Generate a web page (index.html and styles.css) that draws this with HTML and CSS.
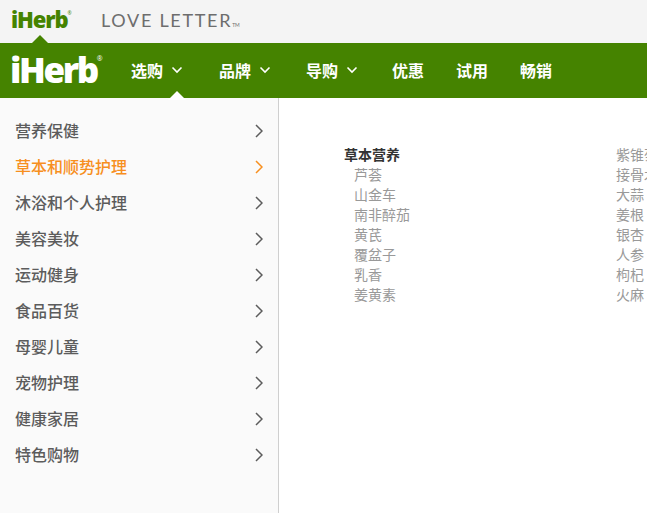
FILE: index.html
```html
<!DOCTYPE html>
<html lang="zh-CN">
<head>
    <meta charset="UTF-8">
    <title>iHerb</title>
    <link rel="stylesheet" href="styles.css">
</head>
<body>
    <div class="topbar">
        <div class="top-tab">
            <span class="logo-small">iHerb<sup>®</sup></span>
        </div>
        <span class="love-letter">LOVE LETTER<small>TM</small></span>
    </div>
    <nav class="navbar">
        <span class="logo-main">iHerb<sup>®</sup></span>
        <div class="nav-items">
            <a class="nav-item nav-active">选购
                <svg class="caret" viewBox="0 0 12 8"><path d="M1.5 1.5 6 6l4.5-4.5"/></svg>
            </a>
            <a class="nav-item">品牌
                <svg class="caret" viewBox="0 0 12 8"><path d="M1.5 1.5 6 6l4.5-4.5"/></svg>
            </a>
            <a class="nav-item">导购
                <svg class="caret" viewBox="0 0 12 8"><path d="M1.5 1.5 6 6l4.5-4.5"/></svg>
            </a>
            <a class="nav-item">优惠</a>
            <a class="nav-item">试用</a>
            <a class="nav-item">畅销</a>
        </div>
    </nav>
    <div class="main">
        <ul class="sidebar">
            <li>营养保健<svg class="arrow" viewBox="0 0 8 14"><path d="M1 1l6 6-6 6"/></svg></li>
            <li class="current">草本和顺势护理<svg class="arrow" viewBox="0 0 8 14"><path d="M1 1l6 6-6 6"/></svg></li>
            <li>沐浴和个人护理<svg class="arrow" viewBox="0 0 8 14"><path d="M1 1l6 6-6 6"/></svg></li>
            <li>美容美妆<svg class="arrow" viewBox="0 0 8 14"><path d="M1 1l6 6-6 6"/></svg></li>
            <li>运动健身<svg class="arrow" viewBox="0 0 8 14"><path d="M1 1l6 6-6 6"/></svg></li>
            <li>食品百货<svg class="arrow" viewBox="0 0 8 14"><path d="M1 1l6 6-6 6"/></svg></li>
            <li>母婴儿童<svg class="arrow" viewBox="0 0 8 14"><path d="M1 1l6 6-6 6"/></svg></li>
            <li>宠物护理<svg class="arrow" viewBox="0 0 8 14"><path d="M1 1l6 6-6 6"/></svg></li>
            <li>健康家居<svg class="arrow" viewBox="0 0 8 14"><path d="M1 1l6 6-6 6"/></svg></li>
            <li>特色购物<svg class="arrow" viewBox="0 0 8 14"><path d="M1 1l6 6-6 6"/></svg></li>
        </ul>
        <div class="content">
            <div class="column">
                <h4>草本营养</h4>
                <a>芦荟</a>
                <a>山金车</a>
                <a>南非醉茄</a>
                <a>黄芪</a>
                <a>覆盆子</a>
                <a>乳香</a>
                <a>姜黄素</a>
            </div>
            <div class="column column-second">
                <a>紫锥菊</a>
                <a>接骨木</a>
                <a>大蒜</a>
                <a>姜根</a>
                <a>银杏</a>
                <a>人参</a>
                <a>枸杞</a>
                <a>火麻</a>
            </div>
        </div>
    </div>
</body>
</html>
```

FILE: styles.css
```css
html, body {
    margin: 0;
    padding: 0;
    height: 100%;
    overflow: hidden;
    background-color: #ffffff;
    font-family: "Liberation Sans", "Noto Sans CJK SC", sans-serif;
}

.topbar {
    height: 43px;
    background-color: #f4f4f4;
    display: flex;
    align-items: center;
    padding-left: 11px;
}

.top-tab {
    position: relative;
    height: 43px;
    width: 90px;
    display: flex;
    align-items: center;
    padding-bottom: 6px;
    box-sizing: border-box;
}

.top-tab::after {
    content: "";
    position: absolute;
    left: 21px;
    bottom: 0;
    border-left: 8px solid transparent;
    border-right: 8px solid transparent;
    border-bottom: 8px solid #458300;
}

.logo-small {
    font-family: "Open Sans", sans-serif;
    font-weight: 800;
    font-size: 22px;
    letter-spacing: -1.1px;
    color: #458300;
    line-height: 1;
}

.logo-small sup {
    font-size: 5px;
    font-weight: 400;
    vertical-align: 13px;
    line-height: 0;
    letter-spacing: 0;
}

.love-letter {
    font-family: "Lato", sans-serif;
    font-size: 18px;
    letter-spacing: 1.7px;
    color: #6d6d6d;
    margin-bottom: 4px;
}

.love-letter small {
    font-size: 5px;
    letter-spacing: 0;
}

.navbar {
    height: 55px;
    background-color: #458300;
    display: flex;
    align-items: center;
    color: #ffffff;
}

.logo-main {
    font-family: "Open Sans", sans-serif;
    font-weight: 800;
    font-size: 35px;
    letter-spacing: -2.4px;
    line-height: 1;
    margin-left: 10px;
    width: 121px;
    flex: none;
    margin-bottom: 3px;
}

.logo-main sup {
    font-size: 7px;
    font-weight: 400;
    vertical-align: 22px;
    line-height: 0;
    letter-spacing: 0;
}

.nav-items {
    display: flex;
    align-items: center;
    height: 100%;
}

.nav-item {
    position: relative;
    display: flex;
    align-items: center;
    font-size: 16px;
    font-weight: bold;
    margin-right: 32px;
    margin-bottom: 2px;
}

.nav-item:nth-child(1) {
    margin-right: 36px;
}

.nav-item:nth-child(2) {
    margin-right: 35px;
}

.nav-item:nth-child(3) {
    margin-right: 34px;
}

.nav-active::after {
    content: "";
    position: absolute;
    left: 37px;
    bottom: -18px;
    border-left: 9px solid transparent;
    border-right: 9px solid transparent;
    border-bottom: 9px solid #ffffff;
}

.caret {
    width: 12px;
    height: 8px;
    margin-left: 8px;
    fill: none;
    stroke: #ffffff;
    stroke-width: 1.6;
}

.main {
    display: flex;
    height: 415px;
}

.sidebar {
    list-style: none;
    margin: 0;
    padding: 15px 0 0 15px;
    width: 279px;
    box-sizing: border-box;
    background-color: #fafafa;
    border-right: 1px solid #cfcfcf;
    flex: none;
}

.sidebar li {
    height: 36px;
    box-sizing: border-box;
    padding: 0 15px 2px 0;
    font-size: 16px;
    font-weight: 500;
    color: #5c5c5c;
    display: flex;
    align-items: center;
    justify-content: space-between;
}

.sidebar li.current {
    color: #f78f1e;
}

.arrow {
    width: 8px;
    height: 14px;
    margin-top: 2px;
    fill: none;
    stroke: currentColor;
    stroke-width: 1.5;
}

.content {
    display: flex;
    flex: 1;
    overflow: hidden;
    padding: 47px 0 0 65px;
    font-size: 14px;
    line-height: 20px;
}

.column {
    width: 272px;
    flex: none;
}

.column h4 {
    margin: 0;
    font-size: 14px;
    font-weight: bold;
    color: #333333;
}

.column a {
    display: block;
    color: #999999;
    padding-left: 10px;
}

.column-second a {
    padding-left: 0;
    white-space: nowrap;
}
```
